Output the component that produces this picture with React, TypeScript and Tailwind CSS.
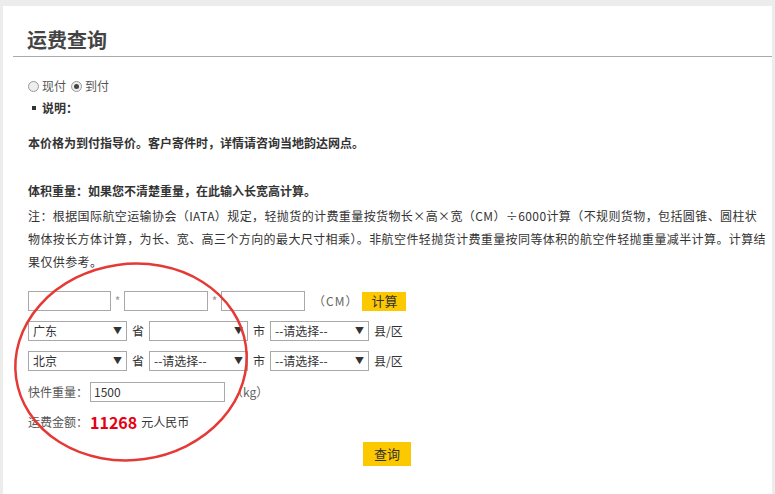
import React from 'react';

const Sel = ({ v }: { v: string }) => (
  <div className="w-[99px] h-[20px] border border-[#a9a9a9] bg-white flex items-center justify-between px-[4px] text-[12px] text-[#333]">
    <span>{v}</span>
    <span className="text-[9px] text-[#333]">▼</span>
  </div>
);

const Box = ({ w, v = '' }: { w: string; v?: string }) => (
  <div className={`${w} h-[20px] border border-[#a9a9a9] bg-white px-[3px] text-[12px] text-[#333] leading-[18px]`}>{v}</div>
);

export default function App() {
  return (
    <div className="w-[775px] h-[494px] bg-[#ececec] pt-[6px] pl-[3px] pr-[3px] overflow-hidden" style={{ fontFamily: '"Noto Sans CJK SC", "Liberation Sans", sans-serif' }}>
      <div className="relative bg-white h-full pl-[10px]">
        <div className="h-[51px] border-b border-[#aaa] flex items-end pb-[6px] pl-[14px]">
          <h1 className="text-[20px] font-bold text-[#444] leading-none">运费查询</h1>
        </div>
        <div className="pl-[15px] pr-[4px] text-[12px] text-[#333]">
          <div className="flex items-center gap-[3px] mt-[21px] h-[16px] text-[#555]">
            <span className="w-[11px] h-[11px] rounded-full border border-[#999] bg-[#eee]" />
            <span>现付</span>
            <span className="w-[11px] h-[11px] rounded-full border border-[#999] bg-[#eee] flex items-center justify-center ml-[2px]"><span className="w-[5px] h-[5px] rounded-full bg-[#444]" /></span>
            <span>到付</span>
          </div>
          <div className="flex items-center gap-[6px] mt-[6px] font-bold h-[16px]">
            <span className="w-[4px] h-[4px] bg-[#333] ml-[4px]" />说明：
          </div>
          <p className="font-bold mt-[18px]">本价格为到付指导价。客户寄件时，详情请咨询当地韵达网点。</p>
          <p className="font-bold mt-[30px]">体积重量：如果您不清楚重量，在此输入长宽高计算。</p>
          <p className="mt-[4px] leading-[23px] tracking-[0.4px]">注：根据国际航空运输协会（IATA）规定，轻抛货的计费重量按货物长×高×宽（CM）÷6000计算（不规则货物，包括圆锥、圆柱状物体按长方体计算，为长、宽、高三个方向的最大尺寸相乘）。非航空件轻抛货计费重量按同等体积的航空件轻抛重量减半计算。计算结果仅供参考。</p>
          <div className="flex items-center mt-[18px] h-[20px]">
            <Box w="w-[83px]" /><span className="w-[13px] text-center text-[#999]">*</span>
            <Box w="w-[84px]" /><span className="w-[13px] text-center text-[#999]">*</span>
            <Box w="w-[84px]" /><span className="ml-[8px] text-[#666] tracking-[1px]">（CM）</span>
            <span className="ml-[4px] bg-[#fcc800] w-[44px] h-[19px] flex items-center justify-center text-[13px] text-[#333]">计算</span>
          </div>
          <div className="flex items-center mt-[10px] gap-[5px] h-[20px]">
            <Sel v="广东" /><span>省</span><Sel v="" /><span>市</span><Sel v="--请选择--" /><span>县/区</span>
          </div>
          <div className="flex items-center mt-[10px] gap-[5px] h-[20px]">
            <Sel v="北京" /><span>省</span><Sel v="--请选择--" /><span>市</span><Sel v="--请选择--" /><span>县/区</span>
          </div>
          <div className="flex items-center mt-[11px] h-[20px]">
            <span className="w-[62px] text-[#555]">快件重量：</span>
            <Box w="w-[135px]" v="1500" />
            <span className="ml-[6px] text-[#666]">（kg）</span>
          </div>
          <div className="flex items-center mt-[10px] h-[20px]">
            <span className="text-[#555]">运费金额：</span>
            <span className="text-[16px] font-bold text-[#e60012] ml-[2px] mr-[4px]">11268</span>
            <span>元人民币</span>
          </div>
          <div className="flex mt-[10px] pl-[335px]">
            <span className="bg-[#fcc800] w-[48px] h-[24px] flex items-center justify-center text-[13px] text-[#333]">查询</span>
          </div>
        </div>
        <svg className="absolute left-[8px] top-[254px] pointer-events-none" width="240" height="204" viewBox="0 0 240 204">
          <ellipse cx="120" cy="102" rx="116" ry="98" fill="none" stroke="#e53935" strokeWidth="2.5" transform="rotate(-8 120 102)" />
        </svg>
      </div>
    </div>
  );
}
